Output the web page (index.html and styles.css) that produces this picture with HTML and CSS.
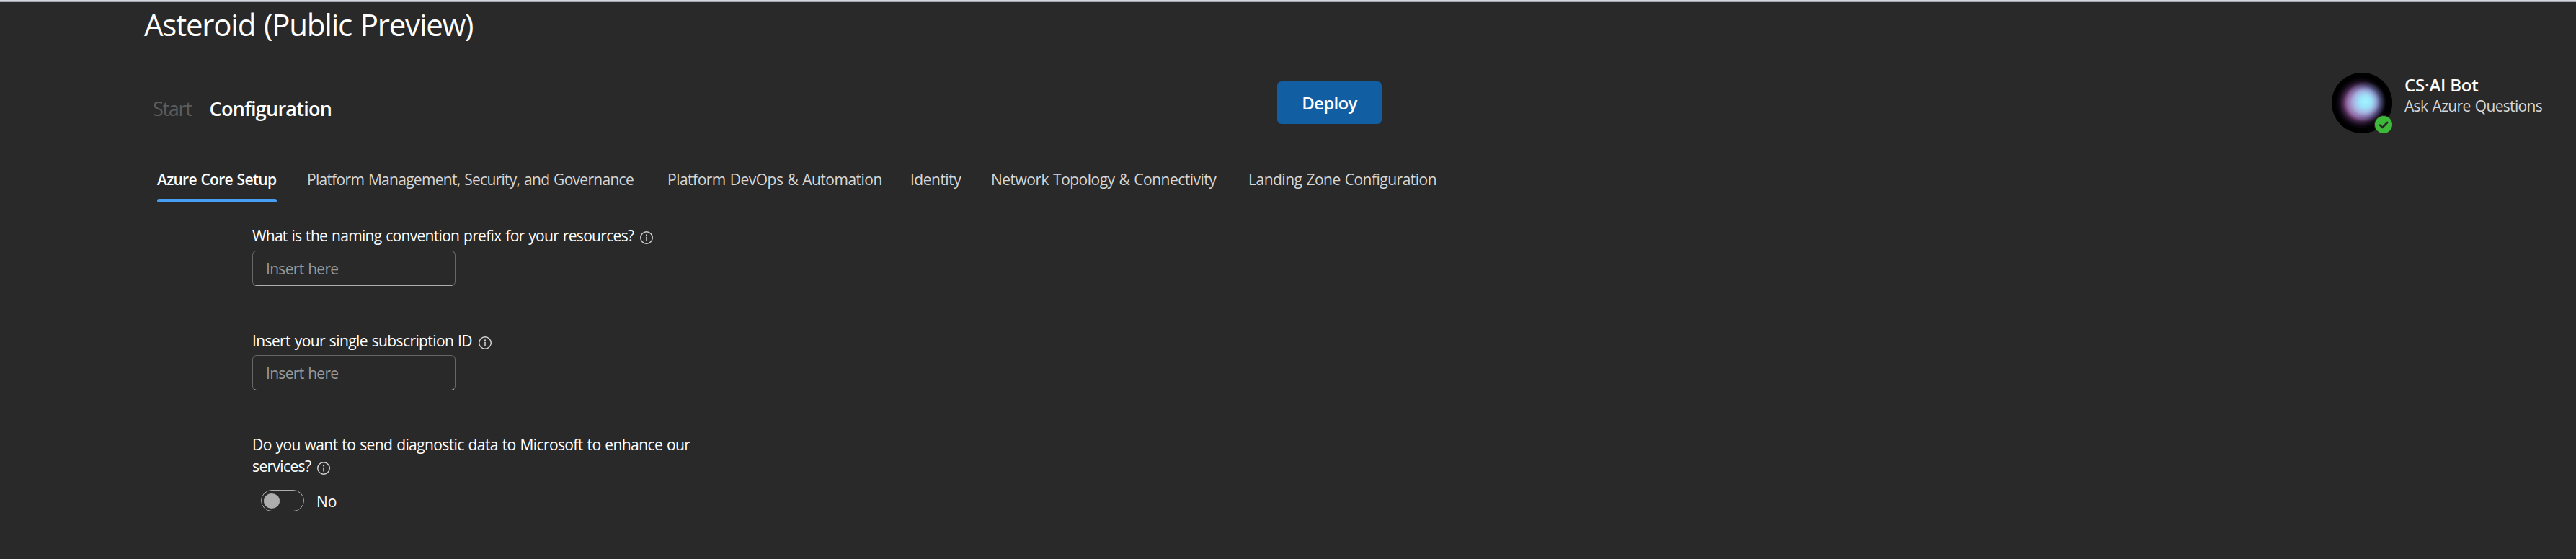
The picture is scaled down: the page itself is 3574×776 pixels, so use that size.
FILE: index.html
```html
<!DOCTYPE html>
<html lang="en">
<head>
<meta charset="utf-8">
<title>Asteroid (Public Preview)</title>
<link rel="stylesheet" href="styles.css">
</head>
<body>
<svg width="0" height="0" class="defs">
  <symbol id="info" viewBox="0 0 18 18">
    <circle cx="9" cy="9" r="8.3" fill="none" stroke="currentColor" stroke-width="1.4"/>
    <circle cx="9" cy="5.4" r="1.05" fill="currentColor"/>
    <path d="M9 8.2v4.9" stroke="currentColor" stroke-width="1.5" stroke-linecap="round"/>
  </symbol>
</svg>
<div class="page">
  <h1 class="title">Asteroid (Public Preview)</h1>
  <header class="toolbar">
    <nav class="steps">
      <span class="step">Start</span>
      <span class="step step-active">Configuration</span>
    </nav>
    <div class="actions"><button class="deploy">Deploy</button></div>
    <div class="bot">
      <div class="avatar">
        <span class="glow"></span>
        <svg class="presence" viewBox="0 0 26 26">
          <circle cx="13" cy="13" r="13" fill="#292929"/>
          <circle cx="13" cy="13" r="12" fill="#3db838"/>
          <path d="M8 13.6l3.4 3.4 6.8-7" fill="none" stroke="#292929" stroke-width="2.6" stroke-linecap="round" stroke-linejoin="round"/>
        </svg>
      </div>
      <div class="bot-text">
        <div class="bot-name">CS·AI Bot</div>
        <div class="bot-sub">Ask Azure Questions</div>
      </div>
    </div>
  </header>
  <nav class="tabs">
    <div><span class="tab tab-active">Azure Core Setup</span></div>
    <div><span class="tab tab-management">Platform Management, Security, and Governance</span></div>
    <div><span class="tab">Platform DevOps &amp; Automation</span></div>
    <div><span class="tab">Identity</span></div>
    <div><span class="tab">Network Topology &amp; Connectivity</span></div>
    <div><span class="tab">Landing Zone Configuration</span></div>
  </nav>
  <form class="form">
    <div class="field">
      <label class="label label-prefix"><span>What is the naming convention prefix for your resources?</span><svg class="info"><use href="#info"/></svg></label>
      <input class="input" type="text" placeholder="Insert here">
    </div>
    <div class="field field-subscription">
      <label class="label label-subscription"><span>Insert your single subscription ID</span><svg class="info"><use href="#info"/></svg></label>
      <input class="input" type="text" placeholder="Insert here">
    </div>
    <div class="field field-diagnostics">
      <div class="label label-diagnostics"><span>Do you want to send diagnostic data to Microsoft to enhance our</span></div>
      <div class="label label-services"><span>services?</span><svg class="info"><use href="#info"/></svg></div>
      <div class="switch-row"><span class="switch"><span class="knob"></span></span><span class="switch-label">No</span></div>
    </div>
  </form>
</div>
</body>
</html>
```
FILE: styles.css
```css
* { box-sizing: border-box; }
body {
  margin: 0;
  background: #292929;
  color: #fff;
  font: 21px/30px "Open Sans", "Noto Sans", sans-serif;
  white-space: nowrap;
  overflow: hidden;
}
.defs { position: absolute; }
.page {
  height: 776px;
  border-top: 2px solid #a5a6aa;
  box-shadow: inset 0 1px #a5a6aa;
  padding-top: 4px;
}
.page::before {
  content: "";
  position: absolute;
  top: 0;
  left: 0;
  right: 0;
  height: 1px;
  background: #d3d6e0;
}
.title {
  margin: 0 0 39px;
  padding-left: 200px;
  font-size: 42px;
  line-height: 56px;
  font-weight: 400;
  letter-spacing: -1.2px;
  word-spacing: 2px;
}
.toolbar {
  display: grid;
  grid-template-columns: 1772px 1463px auto;
  height: 84px;
}
.steps {
  display: flex;
  gap: 25px;
  padding: 32px 0 0 212px;
  font-size: 27px;
  line-height: 36px;
}
.step { color: #5c5c5c; letter-spacing: -1.3px; }
.step-active { color: #fff; font-weight: 600; letter-spacing: -0.76px; }
.actions { padding-top: 12px; }
.deploy {
  width: 145px;
  height: 59px;
  padding: 0;
  border: 0;
  border-radius: 6px;
  background: #115ea3;
  color: #fff;
  font: 600 24px/59px "Open Sans", "Noto Sans", sans-serif;
  letter-spacing: -0.65px;
}
.bot { display: flex; gap: 17px; }
.avatar {
  position: relative;
  width: 84px;
  height: 84px;
  border-radius: 50%;
  background: #000;
}
.glow {
  position: absolute;
  inset: 0;
  border-radius: 50%;
  background:
    radial-gradient(circle at 47px 40px, #a2f3ff 0, #98e6fcee 8px, #8fc4eeaa 15px, #5f84b866 21px, transparent 28px),
    radial-gradient(circle at 41px 42px, #e3c5f0 0, #cf9ecf 14px, #95609a 20px, #3d2344 26px, #120a17 31px, #000 36px);
}
.presence { position: absolute; right: -1px; bottom: -1px; width: 26px; height: 26px; }
.bot-text { padding-top: 2px; }
.bot-name { font-size: 24px; line-height: 30px; font-weight: 600; letter-spacing: -0.2px; }
.bot-sub { line-height: 28px; color: #d6d6d6; letter-spacing: -0.68px; word-spacing: 1.5px; }
.tabs {
  display: grid;
  grid-template-columns: 208px 500px 337px 112px 357px auto;
  margin-top: 49px;
  padding-left: 218px;
  height: 47px;
}
.tab { display: inline-block; color: #d6d6d6; letter-spacing: -0.5px; word-spacing: 1px; }
.tab-management { letter-spacing: -0.71px; }
.tab-active {
  width: 166px;
  color: #fff;
  font-weight: 600;
  letter-spacing: -0.73px;
}
.tab-active::after {
  content: "";
  display: block;
  height: 5px;
  margin-top: 12px;
  border-radius: 3px;
  background: #479ef5;
}
.form { padding: 31px 0 0 350px; }
.label { display: flex; height: 30px; word-spacing: 1px; }
.label-prefix { letter-spacing: -0.69px; }
.label-subscription { letter-spacing: -0.61px; }
.label-diagnostics { letter-spacing: -0.6px; }
.label-services { letter-spacing: -0.63px; }
.info { width: 18px; height: 18px; margin: 9px 0 0 9px; color: #d6d6d6; }
.input {
  display: block;
  width: 282px;
  height: 49px;
  margin: 6px 0 0;
  padding: 0 17px 0 18px;
  border: 1px solid #666;
  border-bottom-color: #adadad;
  border-radius: 6px;
  background: transparent;
  color: #fff;
  font: 21px/30px "Open Sans", "Noto Sans", sans-serif;
  letter-spacing: -0.7px;
  word-spacing: 1px;
}
.input::placeholder { color: #999; opacity: 1; }
.field-subscription { margin-top: 61px; }
.field-subscription .input { margin-top: 5px; }
.field-diagnostics { margin-top: 60px; }
.switch-row { display: flex; margin: 18px 0 0 12px; }
.switch {
  width: 60px;
  height: 30px;
  padding: 3.5px 0 0 3px;
  border: 1px solid #adadad;
  border-radius: 15px;
}
.knob { display: block; width: 22px; height: 21px; border-radius: 50%; background: #adadad; }
.switch-label { margin: 1px 0 0 17px; }
```
